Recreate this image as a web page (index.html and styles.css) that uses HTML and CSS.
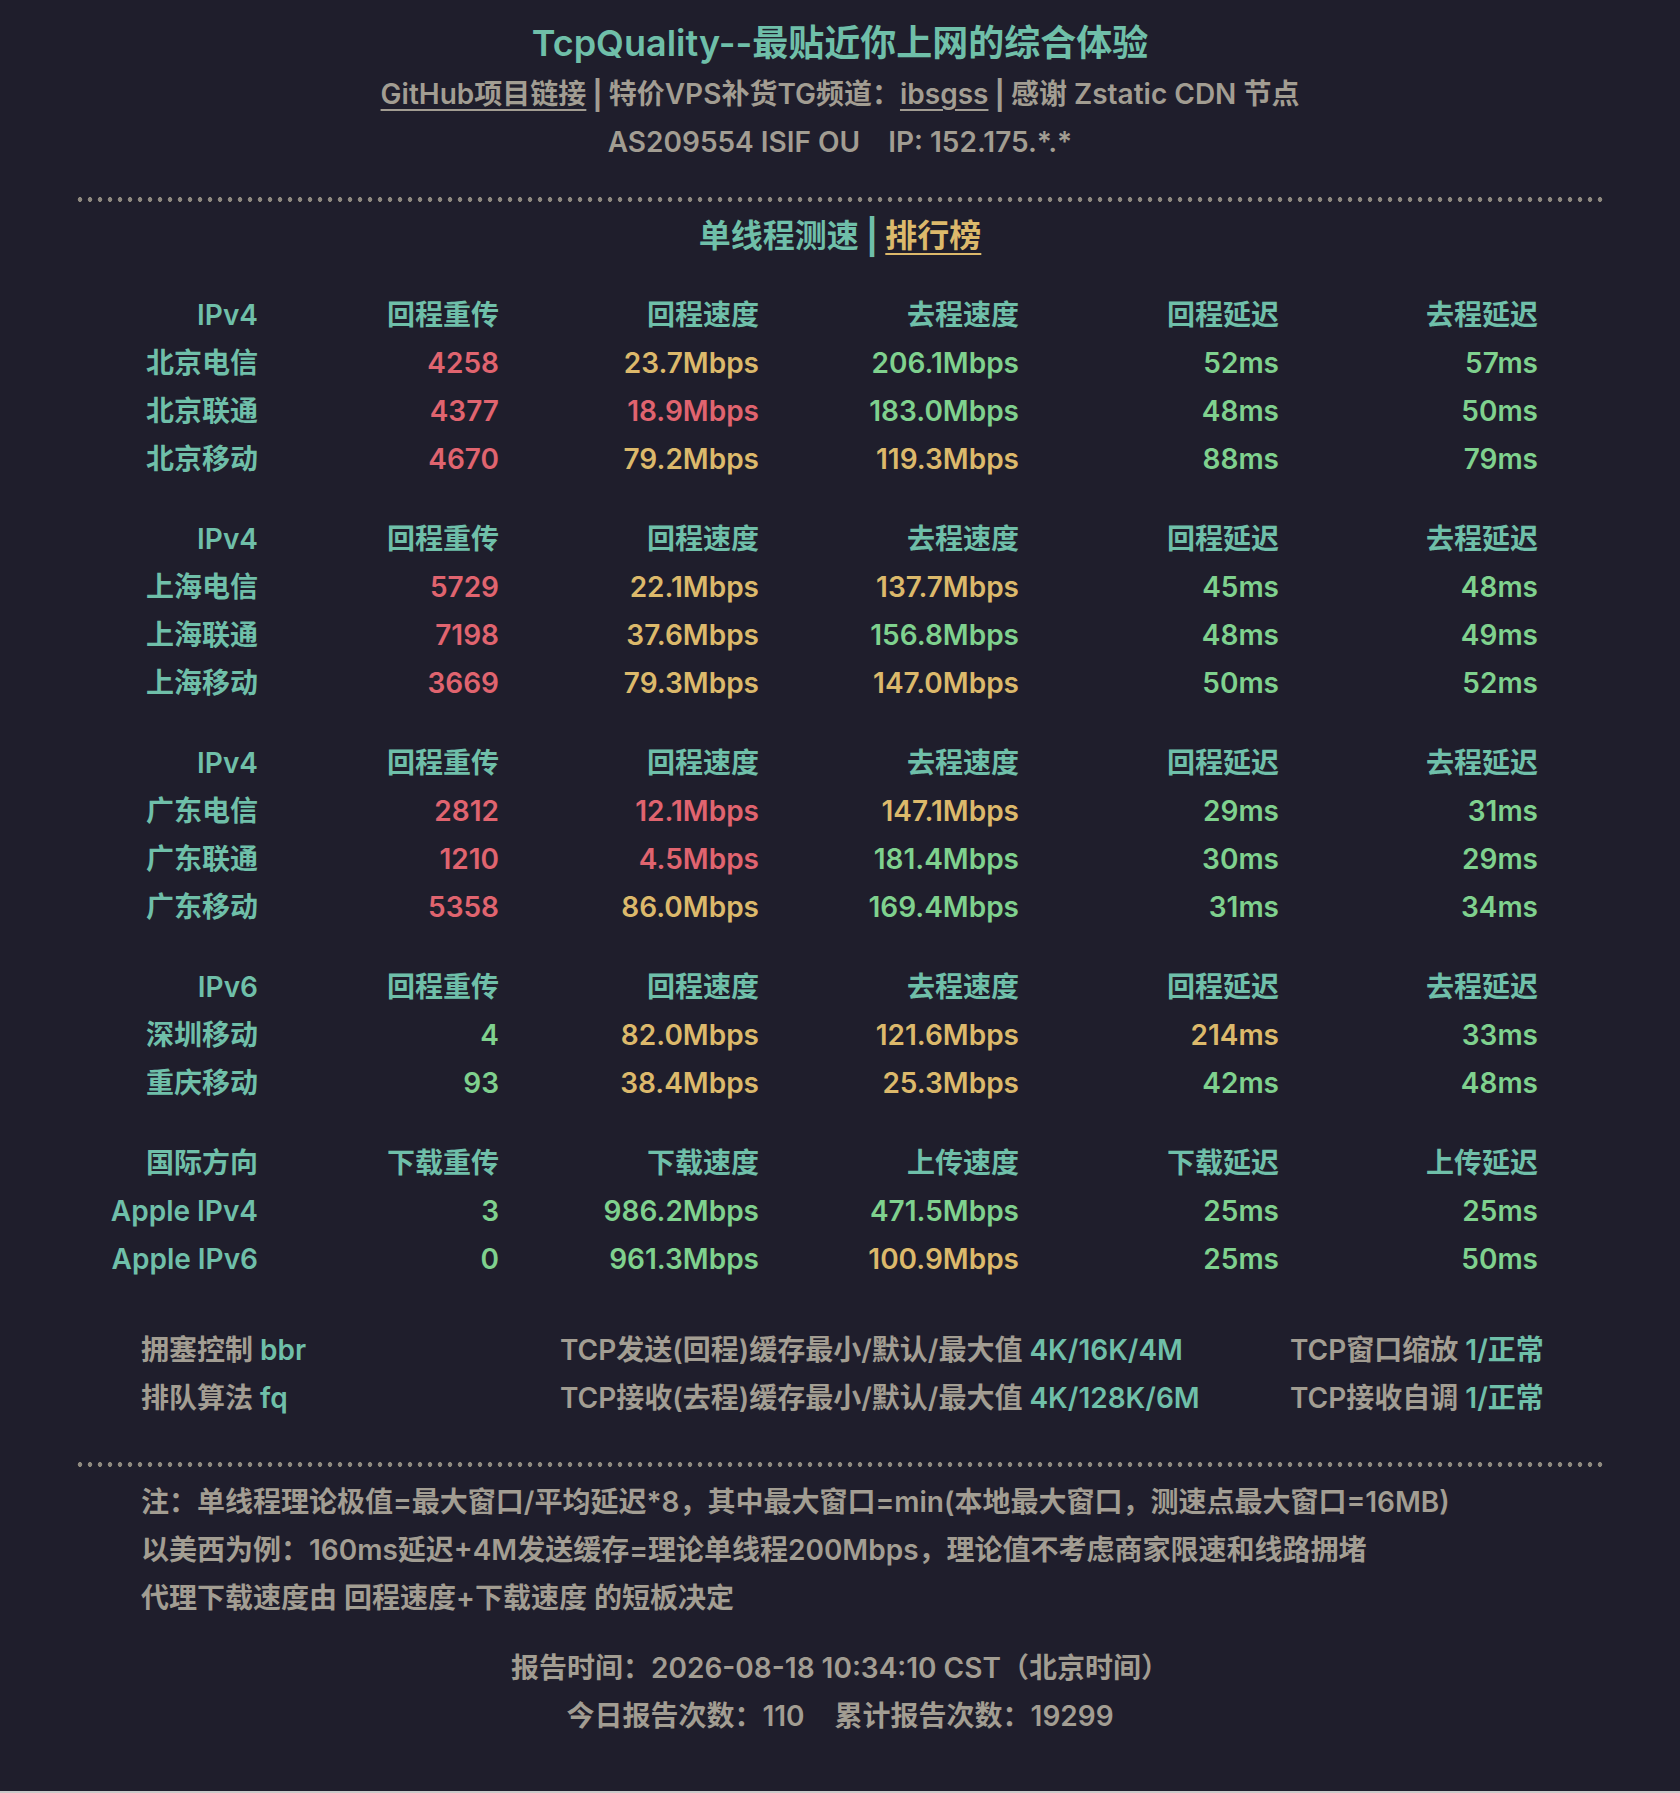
FILE: index.html
```html
<!DOCTYPE html>
<html lang="zh-CN">
<head>
<meta charset="utf-8">
<title>TcpQuality</title>
<link rel="stylesheet" href="styles.css">
</head>
<body>
<div class="page">
  <header class="head">
    <h1 class="title">TcpQuality--最贴近你上网的综合体验</h1>
    <p class="sub"><a class="link" href="#">GitHub项目链接</a><span class="sep">|</span>特价VPS补货TG频道：<a class="link" href="#">ibsgss</a><span class="sep">|</span>感谢 Zstatic CDN 节点</p>
    <p class="sub">AS209554 ISIF OU<span class="gap">IP: 152.175.*.*</span></p>
  </header>

  <div class="divider"></div>

  <nav class="tabs"><span class="tab-cur">单线程测速</span><span class="sep sep-tab">|</span><a class="tab-link" href="#">排行榜</a></nav>

  <section class="table">
    <div class="group">
      <div class="row hd"><span>IPv4</span><span>回程重传</span><span>回程速度</span><span>去程速度</span><span>回程延迟</span><span>去程延迟</span></div>
      <div class="row"><span class="lbl">北京电信</span><span class="r">4258</span><span class="y">23.7Mbps</span><span class="g">206.1Mbps</span><span class="g">52ms</span><span class="g">57ms</span></div>
      <div class="row"><span class="lbl">北京联通</span><span class="r">4377</span><span class="r">18.9Mbps</span><span class="g">183.0Mbps</span><span class="g">48ms</span><span class="g">50ms</span></div>
      <div class="row"><span class="lbl">北京移动</span><span class="r">4670</span><span class="y">79.2Mbps</span><span class="y">119.3Mbps</span><span class="g">88ms</span><span class="g">79ms</span></div>
    </div>
    <div class="group">
      <div class="row hd"><span>IPv4</span><span>回程重传</span><span>回程速度</span><span>去程速度</span><span>回程延迟</span><span>去程延迟</span></div>
      <div class="row"><span class="lbl">上海电信</span><span class="r">5729</span><span class="y">22.1Mbps</span><span class="y">137.7Mbps</span><span class="g">45ms</span><span class="g">48ms</span></div>
      <div class="row"><span class="lbl">上海联通</span><span class="r">7198</span><span class="y">37.6Mbps</span><span class="g">156.8Mbps</span><span class="g">48ms</span><span class="g">49ms</span></div>
      <div class="row"><span class="lbl">上海移动</span><span class="r">3669</span><span class="y">79.3Mbps</span><span class="y">147.0Mbps</span><span class="g">50ms</span><span class="g">52ms</span></div>
    </div>
    <div class="group">
      <div class="row hd"><span>IPv4</span><span>回程重传</span><span>回程速度</span><span>去程速度</span><span>回程延迟</span><span>去程延迟</span></div>
      <div class="row"><span class="lbl">广东电信</span><span class="r">2812</span><span class="r">12.1Mbps</span><span class="y">147.1Mbps</span><span class="g">29ms</span><span class="g">31ms</span></div>
      <div class="row"><span class="lbl">广东联通</span><span class="r">1210</span><span class="r">4.5Mbps</span><span class="g">181.4Mbps</span><span class="g">30ms</span><span class="g">29ms</span></div>
      <div class="row"><span class="lbl">广东移动</span><span class="r">5358</span><span class="y">86.0Mbps</span><span class="g">169.4Mbps</span><span class="g">31ms</span><span class="g">34ms</span></div>
    </div>
    <div class="group">
      <div class="row hd"><span>IPv6</span><span>回程重传</span><span>回程速度</span><span>去程速度</span><span>回程延迟</span><span>去程延迟</span></div>
      <div class="row"><span class="lbl">深圳移动</span><span class="g">4</span><span class="y">82.0Mbps</span><span class="y">121.6Mbps</span><span class="y">214ms</span><span class="g">33ms</span></div>
      <div class="row"><span class="lbl">重庆移动</span><span class="g">93</span><span class="y">38.4Mbps</span><span class="y">25.3Mbps</span><span class="g">42ms</span><span class="g">48ms</span></div>
    </div>
    <div class="group">
      <div class="row hd"><span>国际方向</span><span>下载重传</span><span>下载速度</span><span>上传速度</span><span>下载延迟</span><span>上传延迟</span></div>
      <div class="row"><span class="lbl">Apple IPv4</span><span class="g">3</span><span class="g">986.2Mbps</span><span class="g">471.5Mbps</span><span class="g">25ms</span><span class="g">25ms</span></div>
      <div class="row"><span class="lbl">Apple IPv6</span><span class="g">0</span><span class="g">961.3Mbps</span><span class="y">100.9Mbps</span><span class="g">25ms</span><span class="g">50ms</span></div>
    </div>
  </section>

  <section class="settings">
    <div>拥塞控制 <b class="v">bbr</b></div>
    <div>TCP发送(回程)缓存最小/默认/最大值 <b class="v">4K/16K/4M</b></div>
    <div>TCP窗口缩放 <b class="v">1/正常</b></div>
    <div>排队算法 <b class="v">fq</b></div>
    <div>TCP接收(去程)缓存最小/默认/最大值 <b class="v">4K/128K/6M</b></div>
    <div>TCP接收自调 <b class="v">1/正常</b></div>
  </section>

  <div class="divider divider-2"></div>

  <section class="notes">
    <p>注：单线程理论极值=最大窗口/平均延迟*8，其中最大窗口=min(本地最大窗口，测速点最大窗口=16MB)</p>
    <p>以美西为例：160ms延迟+4M发送缓存=理论单线程200Mbps，理论值不考虑商家限速和线路拥堵</p>
    <p>代理下载速度由 回程速度+下载速度 的短板决定</p>
  </section>

  <footer class="report">
    <p>报告时间：2026-08-18 10:34:10 CST（北京时间）</p>
    <p>今日报告次数：110<span class="gap gap-wide">累计报告次数：19299</span></p>
  </footer>
</div>
</body>
</html>
```

FILE: styles.css
```css
html {
  background: #c9c9c9;
}
body {
  margin: 0;
}
.page {
  background: #1f1e2c;
  color: #a29d92;
  font-family: Inter, "Noto Sans CJK SC", sans-serif;
  font-weight: 600;
  font-size: 28px;
  line-height: 48px;
  padding: 16px 0 51px;
}
.head {
  text-align: center;
}
.title {
  margin: 0;
  font-size: 36px;
  line-height: 54px;
  font-weight: 600;
  color: #6fbfa9;
}
.sub {
  margin: 0;
}
.link {
  color: #a29d92;
  text-decoration: underline;
  text-decoration-thickness: 2px;
  text-underline-offset: 5px;
}
.sep {
  font-family: "DejaVu Sans", sans-serif;
  font-weight: 700;
  font-size: 34px;
  line-height: 0;
  margin: 0 5px;
}
.gap {
  margin-left: 28px;
}
.gap-wide {
  margin-left: 30px;
}
.divider {
  margin: 31px 75px 0;
  height: 5px;
  background-image: radial-gradient(circle, #8e897f 2.1px, transparent 2.6px);
  background-size: 10px 5px;
}
.divider-2 {
  margin-top: 40px;
}
.tabs {
  margin-top: 10px;
  text-align: center;
  color: #6fbfa9;
  font-size: 32px;
}
.sep-tab {
  font-size: 40px;
  margin: 0 6px;
  color: #6fbfa9;
}
.tab-link {
  color: #dcb96b;
  text-decoration: underline;
  text-decoration-thickness: 2px;
  text-underline-offset: 6px;
}
.table {
  margin: 31px 0 0 80px;
  display: flex;
  flex-direction: column;
  gap: 32px;
}
.row {
  display: grid;
  grid-template-columns: 178px 241px 260px 260px 260px 259px;
  text-align: right;
}
.hd,
.lbl {
  color: #6fbfa9;
}
.r { color: #e0646f; }
.y { color: #dcb96b; }
.g { color: #7fd18e; }
.settings {
  margin: 43px 0 0 141px;
  display: grid;
  grid-template-columns: 419px 730px auto;
}
.settings b {
  font-weight: 600;
}
.v {
  color: #6fbfa9;
}
.notes {
  margin: 11px 0 0 141px;
}
.notes p,
.report p {
  margin: 0;
}
.report {
  margin-top: 22px;
  text-align: center;
}
```
